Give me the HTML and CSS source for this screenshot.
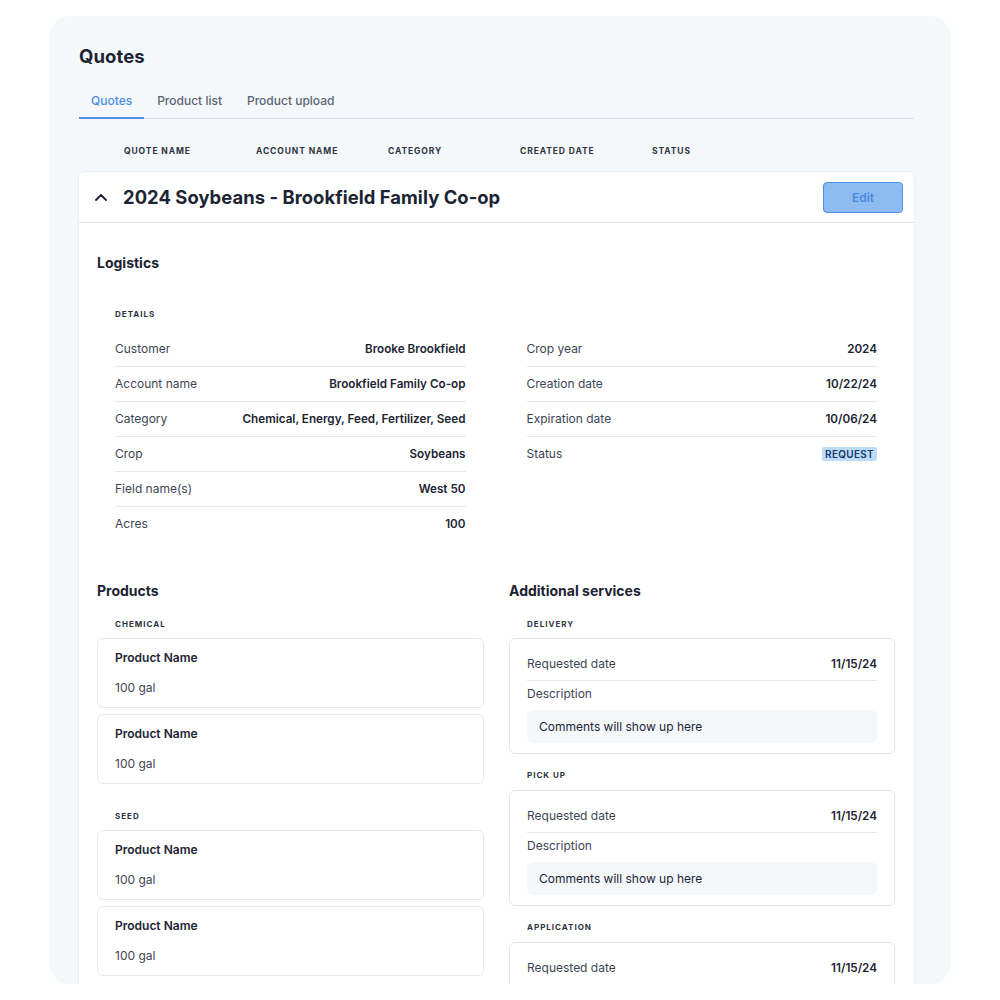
FILE: index.html
```html
<!DOCTYPE html>
<html lang="en">
<head>
  <meta charset="UTF-8" />
  <title>Quotes</title>
  <link rel="stylesheet" href="styles.css">
</head>
<body>

<div class="page">
  <h1 class="page-title">Quotes</h1>

  <nav class="tabs">
    <a class="tab active">Quotes</a>
    <a class="tab">Product list</a>
    <a class="tab">Product upload</a>
  </nav>

  <div class="col-heads">
    <span>Quote name</span>
    <span>Account name</span>
    <span>Category</span>
    <span>Created date</span>
    <span>Status</span>
  </div>

  <section class="quote-card">
    <header class="quote-head">
      <svg class="chevron" width="12" height="8" viewBox="0 0 12 8">
        <path d="M1 7 L6 2 L11 7" fill="none" stroke="#1c2433" stroke-width="1.8" stroke-linecap="round" stroke-linejoin="round"/>
      </svg>
      <h2 class="quote-title">2024 Soybeans - Brookfield Family Co-op</h2>
      <button class="edit-btn">Edit</button>
    </header>

    <div class="quote-body">
      <h3 class="section-title">Logistics</h3>

      <div class="details">
        <div class="caps">Details</div>
        <div class="details-grid">
          <!-- left column -->
          <div class="rows">
            <div class="row"><span>Customer</span><b>Brooke Brookfield</b></div>
            <div class="row"><span>Account name</span><b>Brookfield Family Co-op</b></div>
            <div class="row"><span>Category</span><b>Chemical, Energy, Feed, Fertilizer, Seed</b></div>
            <div class="row"><span>Crop</span><b>Soybeans</b></div>
            <div class="row"><span>Field name(s)</span><b>West 50</b></div>
            <div class="row"><span>Acres</span><b>100</b></div>
          </div>
          <!-- right column -->
          <div class="rows">
            <div class="row"><span>Crop year</span><b>2024</b></div>
            <div class="row"><span>Creation date</span><b>10/22/24</b></div>
            <div class="row"><span>Expiration date</span><b>10/06/24</b></div>
            <div class="row"><span>Status</span><b class="badge">REQUEST</b></div>
          </div>
        </div>
      </div>

      <div class="lower">
        <div class="products">
          <h3 class="section-title">Products</h3>

          <div class="group">
            <div class="caps">Chemical</div>
            <div class="product-box">
              <div class="product-name">Product Name</div>
              <div class="product-qty">100 gal</div>
            </div>
            <div class="product-box">
              <div class="product-name">Product Name</div>
              <div class="product-qty">100 gal</div>
            </div>
          </div>

          <div class="group">
            <div class="caps">Seed</div>
            <div class="product-box">
              <div class="product-name">Product Name</div>
              <div class="product-qty">100 gal</div>
            </div>
            <div class="product-box">
              <div class="product-name">Product Name</div>
              <div class="product-qty">100 gal</div>
            </div>
          </div>
        </div>

        <div class="services">
          <h3 class="section-title">Additional services</h3>

          <div class="service">
            <div class="caps">Delivery</div>
            <div class="service-box">
              <div class="row"><span>Requested date</span><b>11/15/24</b></div>
              <div class="desc-label">Description</div>
              <div class="comment">Comments will show up here</div>
            </div>
          </div>

          <div class="service">
            <div class="caps">Pick up</div>
            <div class="service-box">
              <div class="row"><span>Requested date</span><b>11/15/24</b></div>
              <div class="desc-label">Description</div>
              <div class="comment">Comments will show up here</div>
            </div>
          </div>

          <div class="service">
            <div class="caps">Application</div>
            <div class="service-box">
              <div class="row"><span>Requested date</span><b>11/15/24</b></div>
            </div>
          </div>
        </div>
      </div>
    </div>
  </section>
</div>

</body>
</html>
```

FILE: styles.css
```css
body {
  margin: 0;
  background: #fff;
  font-family: Inter, "Liberation Sans", sans-serif;
  color: #1c2433;
}
.page {
  margin: 16px 0 0 50px;
  width: 900px;
  height: 968px;
  box-sizing: border-box;
  padding: 28px 36px 0 29px;
  background: #f5f8fb;
  border-radius: 20px;
  overflow: hidden;
}
.page-title {
  margin: 0;
  font-size: 18.5px;
  line-height: 24px;
  font-weight: 700;
  letter-spacing: 0.1px;
}
.tabs {
  display: flex;
  margin-top: 25px;
  border-bottom: 1px solid #d5dde7;
}
.tab {
  padding: 0 12px 8px;
  font-size: 12px;
  line-height: 16px;
  font-weight: 500;
  color: #5a6472;
  margin-bottom: -1px;
  border-bottom: 2px solid transparent;
}
.tab + .tab {
  padding-left: 13px;
}
.tab.active {
  color: #4a8fe0;
  border-bottom-color: #4a8fe0;
}
.col-heads {
  display: grid;
  grid-template-columns: repeat(5, 132px);
  padding-left: 45px;
  margin-top: 26px;
  font-size: 8.5px;
  line-height: 12px;
  font-weight: 700;
  letter-spacing: 0.9px;
  text-transform: uppercase;
  color: #2c3441;
}
.quote-card {
  margin-top: 15px;
  background: #fff;
  border-radius: 6px 6px 0 0;
  box-shadow: 0 0 0 1px #eceff3, 0 1px 3px rgba(20, 30, 50, 0.06);
}
.quote-head {
  display: flex;
  align-items: center;
  height: 50px;
  padding: 0 11px 0 16px;
  border-bottom: 1px solid #dfe4ea;
}
.chevron {
  margin-right: 16px;
}
.quote-title {
  flex: 1;
  margin: 0;
  font-size: 18.4px;
  font-weight: 700;
  letter-spacing: 0.05px;
}
.edit-btn {
  width: 80px;
  height: 31px;
  background: #8fbcf0;
  border: 1.5px solid #4d92e4;
  border-radius: 4px;
  color: #4a8ade;
  font-family: Inter, "Liberation Sans", sans-serif;
  font-size: 12px;
  font-weight: 600;
}
.quote-body {
  padding: 31px 19px 0 18px;
}
.section-title {
  margin: 0;
  font-size: 14px;
  line-height: 18px;
  font-weight: 700;
}
.caps {
  font-size: 8px;
  line-height: 10px;
  font-weight: 700;
  letter-spacing: 1px;
  text-transform: uppercase;
  color: #2c3441;
}
.details {
  padding: 37px 18px 0;
}
.details-grid {
  display: grid;
  grid-template-columns: 1fr 1fr;
  column-gap: 61px;
  margin-top: 13px;
}
.row {
  display: flex;
  justify-content: space-between;
  align-items: center;
  font-size: 12px;
  line-height: 16px;
  color: #3c4553;
}
.rows .row {
  height: 34px;
  border-bottom: 1px solid #e4e9ef;
}
.rows .row:last-child {
  border-bottom: none;
}
.row b {
  font-size: 11.7px;
  font-weight: 600;
  color: #1c2433;
}
.row b.badge {
  background: #bcdcf8;
  color: #17376a;
  font-size: 10px;
  line-height: 14px;
  padding: 0 3px;
  border-radius: 2px;
  letter-spacing: 0.3px;
}
.lower {
  display: grid;
  grid-template-columns: 387px 386px;
  column-gap: 25px;
  margin-top: 41px;
}
.group .caps,
.service .caps {
  padding-left: 18px;
  margin-bottom: 9px;
}
.group {
  margin-top: 19px;
}
.group + .group {
  margin-top: 27px;
}
.product-box {
  border: 1px solid #e4e9ef;
  border-radius: 6px;
  padding: 11px 17px 11px;
  margin-bottom: 6px;
}
.product-name {
  font-size: 12px;
  line-height: 16px;
  font-weight: 600;
}
.product-qty {
  margin-top: 14px;
  font-size: 12px;
  line-height: 16px;
  color: #3c4553;
}
.service {
  margin-top: 16px;
}
.service:first-of-type {
  margin-top: 19px;
}
.service + .service .caps {
  margin-bottom: 10px;
}
.service-box {
  border: 1px solid #dfe5ec;
  border-radius: 6px;
  padding: 9px 17px 10px;
}
.service-box .row {
  padding: 8px 0;
  border-bottom: 1px solid #e4e9ef;
}
.desc-label {
  margin-top: 5px;
  font-size: 12px;
  line-height: 16px;
  color: #3c4553;
}
.comment {
  margin-top: 8px;
  padding: 8px 12px;
  background: #f5f8fb;
  border-radius: 6px;
  font-size: 12px;
  line-height: 17px;
  color: #1c2433;
}
```
